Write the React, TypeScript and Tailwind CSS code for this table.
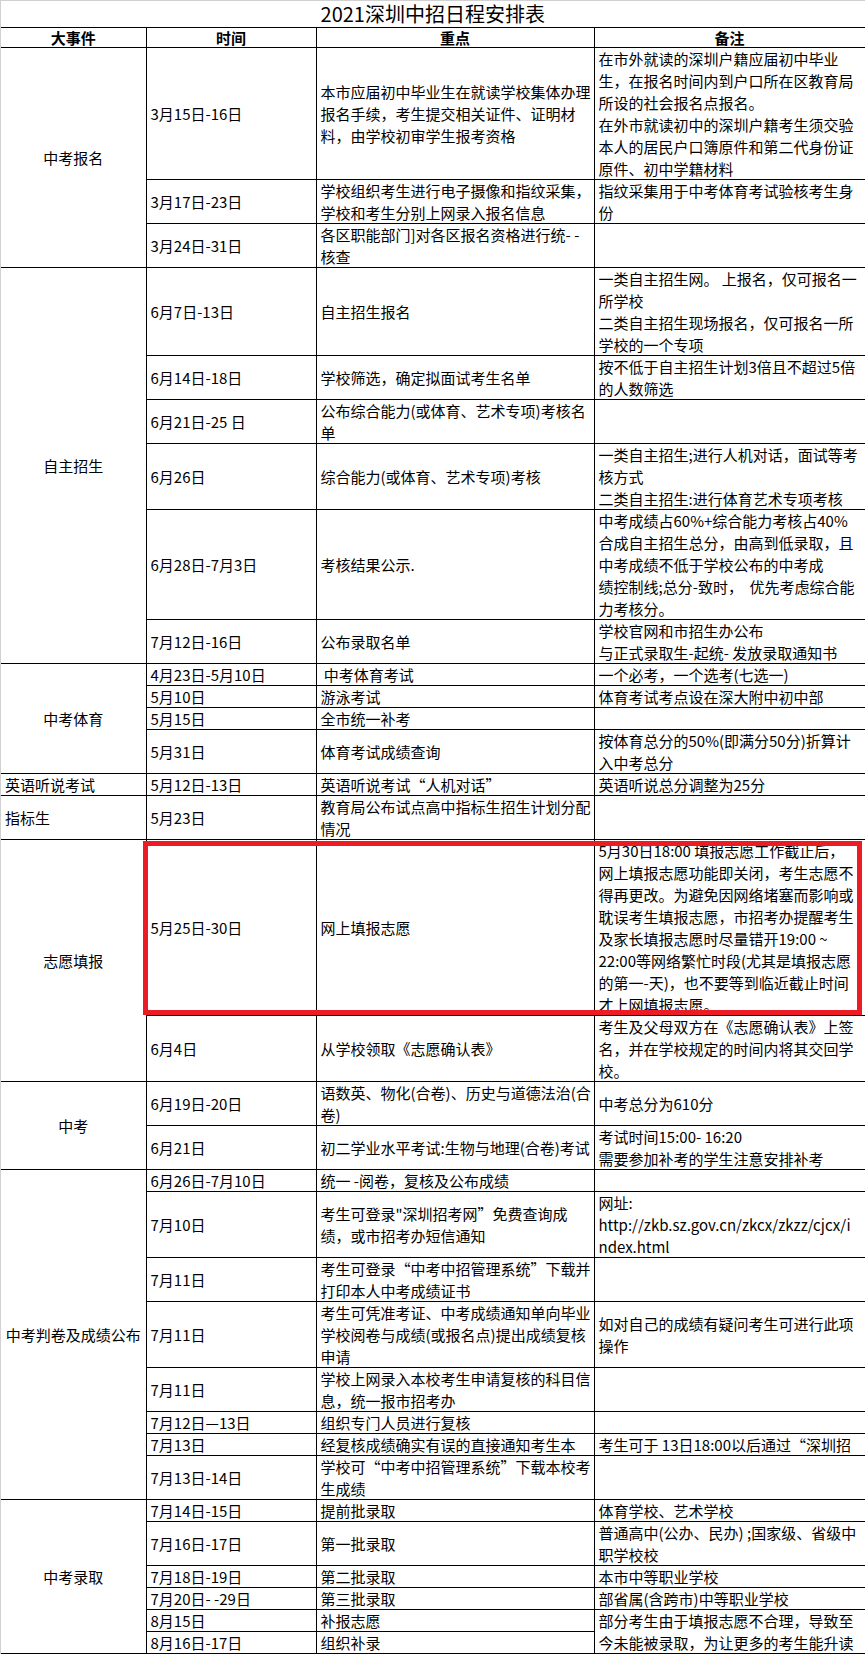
type Row = {
  h: number;
  time: string;
  key: string[];
  note?: string[];
  noteSpan?: number;
  skipNote?: boolean;
};

type Section = { name: string; left?: boolean; rows: Row[] };

const sections: Section[] = [
  {
    name: "中考报名",
    rows: [
      {
        h: 6,
        time: "3月15日-16日",
        key: ["本市应届初中毕业生在就读学校集体办理", "报名手续，考生提交相关证件、证明材", "料，由学校初审学生报考资格"],
        note: [
          "在市外就读的深圳户籍应届初中毕业",
          "生，在报名时间内到户口所在区教育局",
          "所设的社会报名点报名。",
          "在外市就读初中的深圳户籍考生须交验",
          "本人的居民户口簿原件和第二代身份证",
          "原件、初中学籍材料",
        ],
      },
      {
        h: 2,
        time: "3月17日-23日",
        key: ["学校组织考生进行电子摄像和指纹采集，", "学校和考生分别上网录入报名信息"],
        note: ["指纹采集用于中考体育考试验核考生身", "份"],
      },
      { h: 2, time: "3月24日-31日", key: ["各区职能部门]对各区报名资格进行统- -", "核查"] },
    ],
  },
  {
    name: "自主招生",
    rows: [
      {
        h: 4,
        time: "6月7日-13日",
        key: ["自主招生报名"],
        note: ["一类自主招生网。 上报名，仅可报名一", "所学校", "二类自主招生现场报名，仅可报名一所", "学校的一个专项"],
      },
      {
        h: 2,
        time: "6月14日-18日",
        key: ["学校筛选，确定拟面试考生名单"],
        note: ["按不低于自主招生计划3倍且不超过5倍", "的人数筛选"],
      },
      { h: 2, time: "6月21日-25 日", key: ["公布综合能力(或体育、艺术专项)考核名", "单"] },
      {
        h: 3,
        time: "6月26日",
        key: ["综合能力(或体育、艺术专项)考核"],
        note: ["一类自主招生;进行人机对话，面试等考", "核方式", "二类自主招生:进行体育艺术专项考核"],
      },
      {
        h: 5,
        time: "6月28日-7月3日",
        key: ["考核结果公示."],
        note: [
          "中考成绩占60%+综合能力考核占40%",
          "合成自主招生总分，由高到低录取，且",
          "中考成绩不低于学校公布的中考成",
          "绩控制线;总分-致时，  优先考虑综合能",
          "力考核分。",
        ],
      },
      {
        h: 2,
        time: "7月12日-16日",
        key: ["公布录取名单"],
        note: ["学校官网和市招生办公布", "与正式录取生-起统- 发放录取通知书"],
      },
    ],
  },
  {
    name: "中考体育",
    rows: [
      { h: 1, time: "4月23日-5月10日", key: [" 中考体育考试"], note: ["一个必考，一个选考(七选一)"] },
      { h: 1, time: "5月10日", key: ["游泳考试"], note: ["体育考试考点设在深大附中初中部"] },
      { h: 1, time: "5月15日", key: ["全市统一补考"] },
      {
        h: 2,
        time: "5月31日",
        key: ["体育考试成绩查询"],
        note: ["按体育总分的50%(即满分50分)折算计", "入中考总分"],
      },
    ],
  },
  {
    name: "英语听说考试",
    left: true,
    rows: [{ h: 1, time: "5月12日-13日", key: ["英语听说考试“人机对话”"], note: ["英语听说总分调整为25分"] }],
  },
  {
    name: "指标生",
    left: true,
    rows: [{ h: 2, time: "5月23日", key: ["教育局公布试点高中指标生招生计划分配", "情况"] }],
  },
  {
    name: "志愿填报",
    rows: [
      {
        h: 8,
        time: "5月25日-30日",
        key: ["网上填报志愿"],
        note: [
          "5月30日18:00 填报志愿工作截止后，",
          "网上填报志愿功能即关闭，考生志愿不",
          "得再更改。为避免因网络堵塞而影响或",
          "耽误考生填报志愿，市招考办提醒考生",
          "及家长填报志愿时尽量错开19:00 ~",
          "22:00等网络繁忙时段(尤其是填报志愿",
          "的第一-天)，也不要等到临近截止时间",
          "才上网填报志愿。",
        ],
      },
      {
        h: 3,
        time: "6月4日",
        key: ["从学校领取《志愿确认表》"],
        note: ["考生及父母双方在《志愿确认表》上签", "名，并在学校规定的时间内将其交回学", "校。"],
      },
    ],
  },
  {
    name: "中考",
    rows: [
      { h: 2, time: "6月19日-20日", key: ["语数英、物化(合卷)、历史与道德法治(合", "卷)"], note: ["中考总分为610分"] },
      {
        h: 2,
        time: "6月21日",
        key: ["初二学业水平考试:生物与地理(合卷)考试"],
        note: ["考试时间15:00- 16:20", "需要参加补考的学生注意安排补考"],
      },
    ],
  },
  {
    name: "中考判卷及成绩公布",
    rows: [
      { h: 1, time: "6月26日-7月10日", key: ["统一 -阅卷，复核及公布成绩"] },
      {
        h: 3,
        time: "7月10日",
        key: ["考生可登录\"深圳招考网”免费查询成", "绩，或市招考办短信通知"],
        note: ["网址:", "http://zkb.sz.gov.cn/zkcx/zkzz/cjcx/i", "ndex.html"],
      },
      { h: 2, time: "7月11日", key: ["考生可登录“中考中招管理系统”下载并", "打印本人中考成绩证书"] },
      {
        h: 3,
        time: "7月11日",
        key: ["考生可凭准考证、中考成绩通知单向毕业", "学校阅卷与成绩(或报名点)提出成绩复核", "申请"],
        note: ["如对自己的成绩有疑问考生可进行此项", "操作"],
      },
      { h: 2, time: "7月11日", key: ["学校上网录入本校考生申请复核的科目信", "息，统一报市招考办"] },
      { h: 1, time: "7月12日—13日", key: ["组织专门人员进行复核"] },
      {
        h: 1,
        time: "7月13日",
        key: ["经复核成绩确实有误的直接通知考生本"],
        note: ["考生可于 13日18:00以后通过“深圳招"],
      },
      { h: 2, time: "7月13日-14日", key: ["学校可“中考中招管理系统”下载本校考", "生成绩"] },
    ],
  },
  {
    name: "中考录取",
    rows: [
      { h: 1, time: "7月14日-15日", key: ["提前批录取"], note: ["体育学校、艺术学校"] },
      { h: 2, time: "7月16日-17日", key: ["第一批录取"], note: ["普通高中(公办、民办) ;国家级、省级中", "职学校校"] },
      { h: 1, time: "7月18日-19日", key: ["第二批录取"], note: ["本市中等职业学校"] },
      { h: 1, time: "7月20日- -29日", key: ["第三批录取"], note: ["部省属(含跨市)中等职业学校"] },
      {
        h: 1,
        time: "8月15日",
        key: ["补报志愿"],
        noteSpan: 2,
        note: ["部分考生由于填报志愿不合理，导致至", "今未能被录取，为让更多的考生能升读"],
      },
      { h: 1, time: "8月16日-17日", key: ["组织补录"], skipNote: true },
    ],
  },
];

const Cell = ({ h, center, lines }: { h: number; center?: boolean; lines: string[] }) => (
  <div
    className={
      center
        ? "flex flex-col justify-center items-center overflow-hidden"
        : "flex flex-col justify-center items-start overflow-hidden pl-[4px]"
    }
    style={{ height: h }}
  >
    {lines.map((l, i) => (
      <div key={i} className="whitespace-pre leading-[22px]">
        {l}
      </div>
    ))}
  </div>
);

const td = "border border-black p-0 align-middle";

export default function App() {
  return (
    <div className="relative w-[865px] h-[1654px] bg-white text-black text-[15px] font-['Noto_Sans_CJK_SC','Microsoft_YaHei',sans-serif] border-l border-t border-[#d0d0d0] overflow-hidden">
      <table className="table-fixed border-collapse w-[864px]">
        <colgroup>
          <col className="w-[145px]" />
          <col className="w-[170px]" />
          <col className="w-[278px]" />
          <col className="w-[271px]" />
        </colgroup>
        <tbody>
          <tr>
            <td colSpan={4} className="border-b border-r border-black p-0">
              <div className="h-[26px] flex items-center justify-center text-[20px] leading-[26px]">
                2021深圳中招日程安排表
              </div>
            </td>
          </tr>
          <tr className="font-bold">
            {["大事件", "时间", "重点", "备注"].map((t, i) => (
              <td key={t} className={i === 0 ? td + " border-l-0" : td}>
                <div className="h-[19px] flex items-center justify-center leading-[19px]">{t}</div>
              </td>
            ))}
          </tr>
          {sections.map((sec) => {
            const total = sec.rows.reduce((s, r) => s + r.h, 0);
            return sec.rows.map((r, i) => {
              const span = r.noteSpan ?? 1;
              const noteH = sec.rows.slice(i, i + span).reduce((s, x) => s + x.h, 0);
              return (
                <tr key={sec.name + i}>
                  {i === 0 && (
                    <td rowSpan={sec.rows.length} className={td + " border-l-0"}>
                      <Cell h={total * 22 - 1} center={!sec.left} lines={[sec.name]} />
                    </td>
                  )}
                  <td className={td}>
                    <Cell h={r.h * 22 - 1} lines={[r.time]} />
                  </td>
                  <td className={td}>
                    <Cell h={r.h * 22 - 1} lines={r.key} />
                  </td>
                  {!r.skipNote && (
                    <td rowSpan={span} className={td}>
                      <Cell h={noteH * 22 - 1} lines={r.note ?? []} />
                    </td>
                  )}
                </tr>
              );
            });
          })}
        </tbody>
      </table>

      {/* red highlight around 志愿填报 row */}
      <div className="absolute left-[142px] top-[840px] w-[719px] h-[174px] border-[5px] border-[#ed1c24] pointer-events-none" />
    </div>
  );
}
